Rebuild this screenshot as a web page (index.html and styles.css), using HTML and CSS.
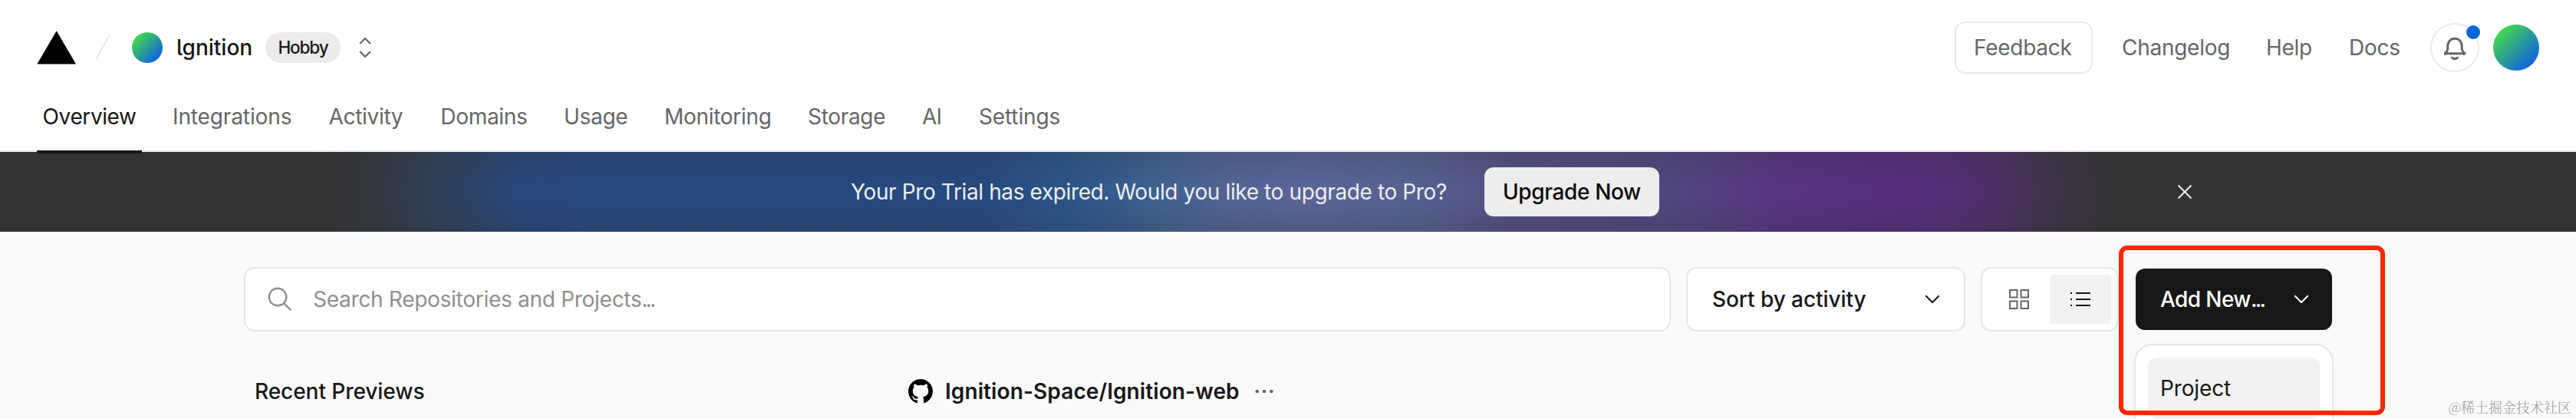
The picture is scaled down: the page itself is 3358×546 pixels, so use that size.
FILE: index.html
```html
<!DOCTYPE html>
<html lang="en">
<head>
<meta charset="utf-8">
<title>Ignition – Dashboard</title>
<link rel="stylesheet" href="styles.css">
</head>
<body>
<div class="page">
  <header class="header">
    <div class="topbar">
      <svg class="logo" width="52" height="44" viewBox="0 0 52 44"><path d="M25.7 0.3L51 43.4H0.4z" fill="#000"/></svg>
      <svg class="slash" width="20" height="34" viewBox="0 0 20 34"><path d="M18.4 1.2L1.2 32.6" stroke="#eaeaea" stroke-width="2.2" stroke-linecap="round"/></svg>
      <span class="avatar avatar-sm"></span>
      <span class="team">lgnition</span>
      <span class="plan">Hobby</span>
      <svg class="switcher" width="16" height="28" viewBox="0 0 16 28" fill="none" stroke="#666" stroke-width="2.2"><path d="M1.2 8.9L8 2l6.800 6.900M1.200 19.100L8 26l6.800-6.900"/></svg>
      <div class="actions">
        <a class="feedback">Feedback</a>
        <nav class="links">
          <a class="l-changelog">Changelog</a>
          <a>Help</a>
          <a class="l-docs">Docs</a>
        </nav>
        <span class="bell">
          <svg width="32" height="34" viewBox="0 0 32 34" fill="none"><path d="M6.800 14.500a9.200 9.200 0 0 1 18.400 0v4.500l2.600 5.700H4.200l2.600-5.700z" stroke="#666" stroke-width="3"/><path d="M2 22.600h4v4H2zM26 22.600h4v4h-4z" fill="#666"/><path d="M10.500 29h3.200c1.100 1.300 3.500 1.300 4.600 0h3.200c-1.600 5.700-9.400 5.700-11 0z" fill="#666"/></svg>
          <i class="dot"></i>
        </span>
        <span class="avatar avatar-lg"></span>
      </div>
    </div>
    <nav class="tabs">
      <a class="tab active">Overview</a>
      <a class="tab t-int">Integrations</a>
      <a class="tab">Activity</a>
      <a class="tab">Domains</a>
      <a class="tab">Usage</a>
      <a class="tab">Monitoring</a>
      <a class="tab">Storage</a>
      <a class="tab t-ai">AI</a>
      <a class="tab t-int">Settings</a>
    </nav>
  </header>

  <section class="banner">
    <p class="banner-text">Your Pro Trial has expired. Would you like to upgrade to Pro?</p>
    <a class="upgrade">Upgrade Now</a>
    <svg class="close" width="20" height="20" viewBox="0 0 20 20"><path d="M1.500 1.500l17 17M18.500 1.500l-17 17" stroke="#ededed" stroke-width="2"/></svg>
  </section>

  <main class="main">
    <div class="toolbar">
      <div class="search">
        <svg width="32" height="32" viewBox="0 0 32 32" fill="none" stroke="#8f8f8f" stroke-width="2.400"><circle cx="13" cy="13" r="11.300"/><path d="M21 21l9.200 9.200"/></svg>
        <span class="placeholder">Search Repositories and Projects<span class="dots">...</span></span>
      </div>
      <div class="sort">
        <span>Sort by activity</span>
        <svg width="20" height="12" viewBox="0 0 20 12" fill="none" stroke="#171717" stroke-width="2"><path d="M1.300 1.300L10 10l8.700-8.700"/></svg>
      </div>
      <div class="toggle">
        <span class="view"><svg width="26" height="26" viewBox="0 0 26 26" fill="none" stroke="#666" stroke-width="2"><path d="M1 1h9.500v9.500H1zM15.500 1H25v9.500h-9.500zM1 15.500h9.500V25H1zM15.500 15.500H25V25h-9.500z"/></svg></span>
        <span class="view selected"><svg width="26" height="18" viewBox="0 0 26 18" fill="#171717"><path d="M0 0h2v2H0zM7 0h19v2H7zM0 8h2v2H0zM7 8h19v2H7zM0 16h2v2H0zM7 16h19v2H7z"/></svg></span>
      </div>
      <div class="add">
        <span>Add New<span class="dots">...</span></span>
        <svg width="20" height="12" viewBox="0 0 20 12" fill="none" stroke="#fff" stroke-width="2"><path d="M1.300 1.300L10 10l8.700-8.700"/></svg>
        <div class="menu"><div class="menu-item">Project</div></div>
      </div>
    </div>
    <div class="headings">
      <h2 class="recent">Recent Previews</h2>
      <svg class="github" width="32" height="32" viewBox="0 0 16 16"><path fill="#000" d="M8 0C3.580 0 0 3.580 0 8c0 3.540 2.290 6.530 5.470 7.590.4.070.55-.17.55-.38 0-.19-.01-.82-.01-1.490-2.010.37-2.530-.49-2.690-.94-.09-.23-.48-.94-.82-1.130-.28-.15-.68-.52-.01-.53.63-.01 1.080.58 1.230.82.72 1.210 1.870.87 2.330.66.07-.52.28-.87.51-1.070-1.780-.2-3.640-.89-3.640-3.950 0-.87.31-1.590.82-2.150-.08-.2-.36-1.020.08-2.120 0 0 .67-.21 2.200.82.64-.18 1.320-.27 2-.27s1.360.09 2 .27c1.530-1.040 2.200-.82 2.200-.82.44 1.100.16 1.920.08 2.120.51.56.82 1.270.82 2.150 0 3.070-1.870 3.750-3.650 3.950.29.25.54.73.54 1.480 0 1.070-.01 1.930-.01 2.200 0 .21.15.46.55.38A8.010 8.010 0 0 0 16 8c0-4.420-3.580-8-8-8z"/></svg>
      <h2 class="repo">Ignition-Space/Ignition-web</h2>
      <svg class="more" width="24" height="6" viewBox="0 0 24 6" fill="#666"><circle cx="2.700" cy="3" r="2.300"/><circle cx="12" cy="3" r="2.300"/><circle cx="21.300" cy="3" r="2.300"/></svg>
    </div>
  </main>
  <div class="highlight"></div>
  <div class="watermark">@稀土掘金技术社区</div>
</div>
</body>
</html>
```
FILE: styles.css
```css
* { box-sizing: border-box; }
body {
  margin: 0;
  font-family: Inter, "Liberation Sans", sans-serif;
  font-size: 28px;
  line-height: 40px;
  letter-spacing: -0.27px;
  color: #171717;
  background: #fafafa;
}
.page { position: relative; height: 546px; overflow: hidden; white-space: nowrap; }
svg { display: block; flex: none; }

.header { height: 198px; background: #fff; border-bottom: 2px solid #eaeaea; }
.topbar { display: flex; align-items: center; height: 124px; padding: 0 48px; }
.slash { margin-left: 24px; }
.avatar { flex: none; border-radius: 50%; background: linear-gradient(135deg, #47e042 10%, #0d5bea 90%); }
.avatar-sm { width: 40px; height: 40px; margin-left: 28px; }
.avatar-lg { width: 60px; height: 60px; margin-left: 18px; }
.team { width: 116px; margin-left: 18px; font-weight: 500; letter-spacing: 0; font-feature-settings: "cv05"; }
.plan {
  width: 98px; height: 40px; border-radius: 20px; background: #ebebeb;
  font-size: 22.500px; font-weight: 500; letter-spacing: -1.100px; text-align: center;
}
.switcher { margin-left: 24px; }
.actions { display: flex; align-items: center; margin-left: auto; color: #666; }
.feedback { width: 180px; height: 68px; padding-left: 23px; border: 2px solid #eaeaea; border-radius: 14px; line-height: 64px; }
.links { display: grid; grid-template-columns: 188px 108px 106px; margin-left: 38px; }
.bell {
  position: relative; display: flex; align-items: center; justify-content: center;
  width: 64px; height: 64px; border: 2px solid #eaeaea; border-radius: 50%;
}
.dot { position: absolute; top: 1px; left: 45px; width: 18px; height: 18px; border-radius: 50%; background: #0068d6; }

.tabs {
  display: grid;
  grid-template-columns: 169.400px 203.500px 145.800px 160.700px 131px 187px 149px 74px 110px;
  height: 74px; padding: 8px 0 0 55.600px; color: #666;
}
.tab { position: relative; letter-spacing: -0.300px; }
.t-int { letter-spacing: -0.120px; }
.t-ai { letter-spacing: -0.800px; }
.active { color: #171717; letter-spacing: -0.400px; }
.active::after { content: ""; position: absolute; left: -7.600px; bottom: -2px; width: 137px; height: 4px; background: #171717; }

.banner {
  display: flex; align-items: center; height: 104px; padding-left: 1109px; color: #ededed;
  background:
    linear-gradient(rgba(51,51,51,.22), rgba(51,51,51,0) 45%, rgba(51,51,51,0) 55%, rgba(51,51,51,.22)),
    linear-gradient(90deg, #333 400px, #32353a 480px, #2f3f58 570px, #29477a 670px, #26497f 770px, #26497f 1270px, #2a5587 1390px, #3c6190 1500px, #526494 1590px, #5b6598 1710px, #56618f 1850px, #544f84 1970px, #50477f 2170px, #553480 2320px, #562e7e 2460px, #532f76 2550px, #4a2f64 2610px, #3d3246 2670px, #333 2760px);
}
.banner-text { width: 826px; margin: 0; letter-spacing: -0.380px; }
.upgrade { width: 228px; height: 64px; padding-left: 24px; border-radius: 12px; background: #ededed; color: #0a0a0a; font-weight: 500; line-height: 64px; letter-spacing: -0.380px; }
.close { margin-left: 675px; }

.main { padding: 46px 318px 0; }
.toolbar { display: flex; align-items: center; height: 84px; }
.search, .sort, .toggle { display: flex; align-items: center; height: 84px; border: 2px solid #e6e6e6; border-radius: 14px; background: #fff; }
.search { width: 1860px; padding-left: 29px; color: #8f8f8f; }
.placeholder { margin-left: 27px; letter-spacing: -0.280px; }
.dots { letter-spacing: -2.700px; }
.sort { justify-content: space-between; width: 364px; margin-left: 20px; padding: 0 31px 0 32px; font-weight: 500; letter-spacing: -0.070px; }
.toggle { width: 180px; margin-left: 20px; padding-left: 8px; }
.view { display: flex; align-items: center; justify-content: center; width: 80px; height: 64px; border-radius: 4px; }
.selected { background: #f2f2f2; }
.add {
  position: relative; display: flex; align-items: center; justify-content: space-between;
  width: 256px; height: 80px; margin-left: 22px; padding: 0 30px 0 32px;
  border-radius: 12px; background: #171717; color: #fff; font-weight: 500; letter-spacing: -0.600px;
}
.menu {
  position: absolute; top: 98px; left: -2px; width: 260px; height: 160px; padding: 16px;
  border: 2px solid #e6e6e6; border-radius: 24px; background: #fff; box-shadow: 0 8px 24px rgba(0,0,0,.03);
  color: #171717; font-weight: 400; letter-spacing: -0.130px;
}
.menu-item { height: 80px; padding-left: 16px; border-radius: 12px; background: #f2f2f2; line-height: 80px; }

.headings { display: flex; align-items: center; height: 40px; margin-top: 58px; padding-left: 14px; }
h2 { margin: 0; font-size: 28px; line-height: 40px; }
.recent { width: 852px; font-weight: 500; letter-spacing: -0.050px; }
.repo { width: 404px; margin-left: 16px; font-weight: 600; letter-spacing: 0.100px; }

.highlight { position: absolute; left: 2762px; top: 320px; width: 347px; height: 221px; border: 6px solid #ff2600; border-radius: 11px; }
.watermark {
  position: absolute; right: 6px; bottom: 2px; color: #9b9b9b;
  font: 300 18px/28px "Noto Serif CJK SC", "Noto Sans CJK SC", sans-serif; letter-spacing: 0;
}
```
